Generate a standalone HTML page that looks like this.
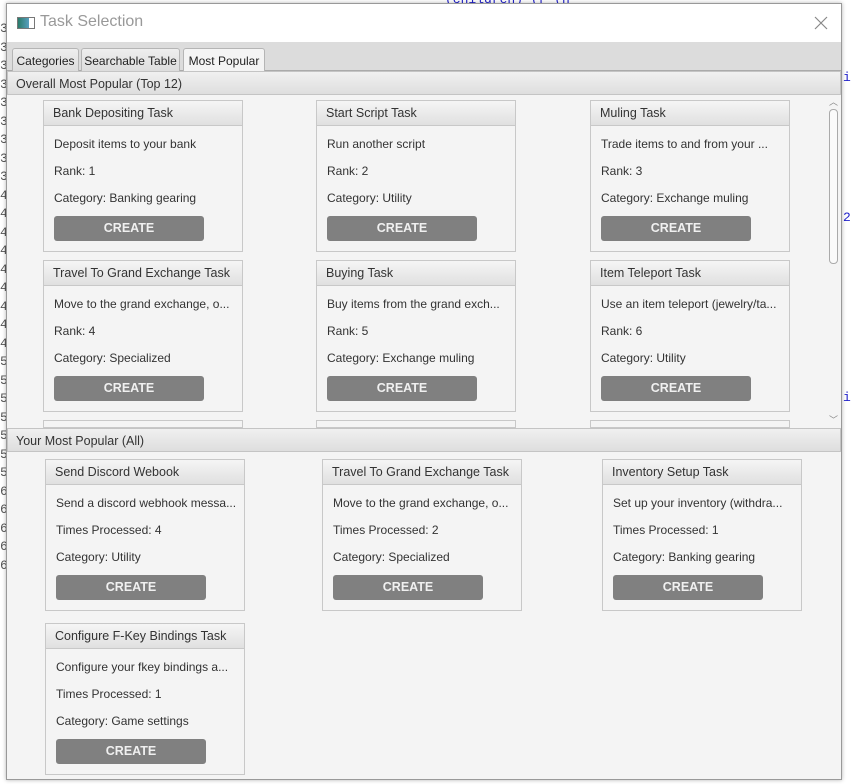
<!DOCTYPE html>
<html><head><style>
*{box-sizing:border-box;margin:0;padding:0}
body{width:854px;height:784px;position:relative;overflow:hidden;background:#fff;font-family:"Liberation Sans",sans-serif;font-size:12px;color:#333}
.bgc{position:absolute;font-family:"Liberation Mono",monospace;font-size:13px}
.win{position:absolute;left:6px;top:3px;width:836px;height:777px;background:#f4f4f4;border:1px solid #999;box-shadow:0 0 4px rgba(0,0,0,.3);overflow:hidden}
.title{position:absolute;left:0;top:0;width:100%;height:38px;background:#fff}
.title span{position:absolute;left:33px;top:9px;font-size:16px;color:#999}
.ico{position:absolute;left:10px;top:13px;width:18px;height:12px;border:1px solid #777;background:linear-gradient(90deg,#2a7b6a,#5aa0c0 70%,#fff 70%)}
.tabbar{position:absolute;left:0;top:38px;width:100%;height:29px;background:#dcdcdc;border-bottom:1px solid #aaa}
.tab{position:absolute;top:6px;height:23px;border:1px solid #b5b5b5;border-bottom:none;border-radius:3px 3px 0 0;background:linear-gradient(#eee,#ddd);font-size:12px;padding:5px 0 0;text-align:center;white-space:nowrap;color:#222}
.sh{position:absolute;left:0;width:100%;height:24px;background:linear-gradient(#f0f0f0,#dedede);border:1px solid #c4c4c4;font-size:12.5px;padding:5px 8px;color:#333;white-space:nowrap}
.card{position:absolute;width:200px;height:152px;border:1px solid #c8c8c8;background:#f4f4f4}
.card .h{height:25px;background:linear-gradient(#f5f5f5,#e0e0e0);border-bottom:1px solid #c8c8c8;padding:5px 9px;font-size:12.5px;white-space:nowrap;border-radius:2px 2px 0 0}
.card p{position:absolute;left:10px;font-size:12px;white-space:nowrap}
.btn{position:absolute;left:10px;top:115px;width:150px;height:25px;background:#808080;border-radius:3px;color:#f0f0f0;font-weight:bold;text-align:center;line-height:25px;font-size:12.5px}
.sb{position:absolute;left:819px;top:91px;width:15px;height:331px;background:#f4f4f4}
.th{position:absolute;left:3px;top:14px;width:9px;height:155px;border:1px solid #aaa;border-radius:4px;background:#fafafa}
</style></head><body>
<div class="bgc" style="left:0;top:20px;color:#555;line-height:18.5px">3<br>3<br>3<br>3<br>3<br>3<br>3<br>3<br>3<br>4<br>4<br>4<br>4<br>4<br>4<br>4<br>4<br>4<br>5<br>5<br>5<br>5<br>5<br>5<br>5<br>6<br>6<br>6<br>6<br>6</div>
<div class="bgc" style="left:843px;top:70px;color:#22c">i</div>
<div class="bgc" style="left:843px;top:210px;color:#22c">2</div>
<div class="bgc" style="left:843px;top:390px;color:#22c">i</div>
<div class="bgc" style="left:445px;top:-8px;color:#22c">(children) (r (n</div>
<div class="win">
<div class="title"><div class="ico"></div><span>Task Selection</span>
<svg style="position:absolute;right:13px;top:12px" width="14" height="14"><path d="M1 1L13 13M13 1L1 13" stroke="#888" stroke-width="1.2"/></svg></div>
<div class="tabbar">
<div class="tab" style="left:5px;width:67px">Categories</div>
<div class="tab" style="left:74px;width:99px">Searchable Table</div>
<div class="tab" style="left:176px;width:82px;background:#f4f4f4;height:24px">Most Popular</div>
</div>
<div class="sh" style="top:67px">Overall Most Popular (Top 12)</div>

<div class="card" style="left:36px;top:96px"><div class="h">Bank Depositing Task</div><p style="top:36px">Deposit items to your bank</p><p style="top:63px">Rank: 1</p><p style="top:90px">Category: Banking gearing</p><div class="btn">CREATE</div></div>
<div class="card" style="left:309px;top:96px"><div class="h">Start Script Task</div><p style="top:36px">Run another script</p><p style="top:63px">Rank: 2</p><p style="top:90px">Category: Utility</p><div class="btn">CREATE</div></div>
<div class="card" style="left:583px;top:96px"><div class="h">Muling Task</div><p style="top:36px">Trade items to and from your ...</p><p style="top:63px">Rank: 3</p><p style="top:90px">Category: Exchange muling</p><div class="btn">CREATE</div></div>
<div class="card" style="left:36px;top:256px"><div class="h">Travel To Grand Exchange Task</div><p style="top:36px">Move to the grand exchange, o...</p><p style="top:63px">Rank: 4</p><p style="top:90px">Category: Specialized</p><div class="btn">CREATE</div></div>
<div class="card" style="left:309px;top:256px"><div class="h">Buying Task</div><p style="top:36px">Buy items from the grand exch...</p><p style="top:63px">Rank: 5</p><p style="top:90px">Category: Exchange muling</p><div class="btn">CREATE</div></div>
<div class="card" style="left:583px;top:256px"><div class="h">Item Teleport Task</div><p style="top:36px">Use an item teleport (jewelry/ta...</p><p style="top:63px">Rank: 6</p><p style="top:90px">Category: Utility</p><div class="btn">CREATE</div></div>
<div class="card" style="left:36px;top:416px;height:8px"></div>
<div class="card" style="left:309px;top:416px;height:8px"></div>
<div class="card" style="left:583px;top:416px;height:8px"></div>
<div class="sb"><div style="position:absolute;left:3px;top:0;font-size:9px;color:#888">︿</div><div class="th"></div><div style="position:absolute;left:3px;top:318px;font-size:9px;color:#888">﹀</div></div>

<div class="sh" style="top:424px">Your Most Popular (All)</div>
<div class="card" style="left:38px;top:455px"><div class="h">Send Discord Webook</div><p style="top:36px">Send a discord webhook messa...</p><p style="top:63px">Times Processed: 4</p><p style="top:90px">Category: Utility</p><div class="btn">CREATE</div></div>
<div class="card" style="left:315px;top:455px"><div class="h">Travel To Grand Exchange Task</div><p style="top:36px">Move to the grand exchange, o...</p><p style="top:63px">Times Processed: 2</p><p style="top:90px">Category: Specialized</p><div class="btn">CREATE</div></div>
<div class="card" style="left:595px;top:455px"><div class="h">Inventory Setup Task</div><p style="top:36px">Set up your inventory (withdra...</p><p style="top:63px">Times Processed: 1</p><p style="top:90px">Category: Banking gearing</p><div class="btn">CREATE</div></div>
<div class="card" style="left:38px;top:619px"><div class="h">Configure F-Key Bindings Task</div><p style="top:36px">Configure your fkey bindings a...</p><p style="top:63px">Times Processed: 1</p><p style="top:90px">Category: Game settings</p><div class="btn">CREATE</div></div>
</div>
</body></html>
